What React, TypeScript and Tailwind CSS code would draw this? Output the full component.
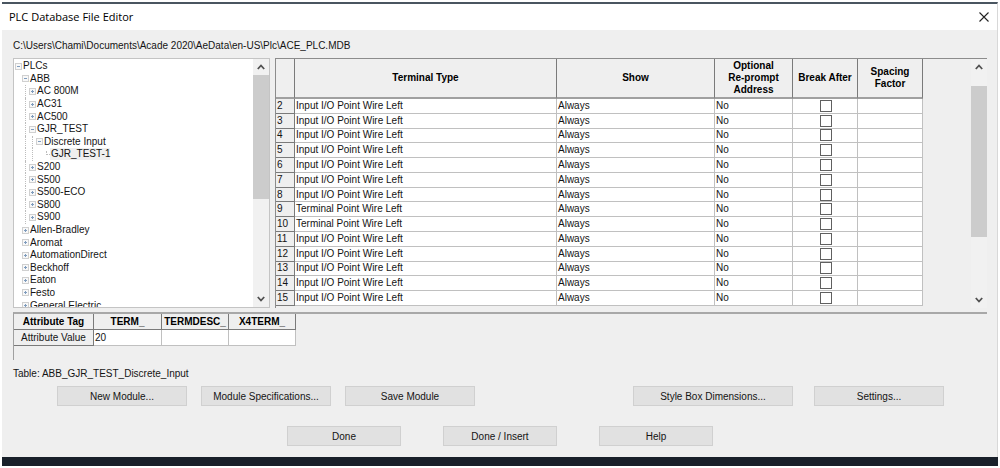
import React, { useState } from 'react';
import clsx from 'clsx';

interface TreeNode {
    label: string;
    level: number;
    state: 'open' | 'closed' | 'leaf';
}

interface TerminalRow {
    id: number;
    type: string;
    show: string;
    reprompt: string;
    spacing: string;
}

const treeNodes: TreeNode[] = [
    { label: 'PLCs', level: 0, state: 'open' },
    { label: 'ABB', level: 1, state: 'open' },
    { label: 'AC 800M', level: 2, state: 'closed' },
    { label: 'AC31', level: 2, state: 'closed' },
    { label: 'AC500', level: 2, state: 'closed' },
    { label: 'GJR_TEST', level: 2, state: 'open' },
    { label: 'Discrete Input', level: 3, state: 'open' },
    { label: 'GJR_TEST-1', level: 4, state: 'leaf' },
    { label: 'S200', level: 2, state: 'closed' },
    { label: 'S500', level: 2, state: 'closed' },
    { label: 'S500-ECO', level: 2, state: 'closed' },
    { label: 'S800', level: 2, state: 'closed' },
    { label: 'S900', level: 2, state: 'closed' },
    { label: 'Allen-Bradley', level: 1, state: 'closed' },
    { label: 'Aromat', level: 1, state: 'closed' },
    { label: 'AutomationDirect', level: 1, state: 'closed' },
    { label: 'Beckhoff', level: 1, state: 'closed' },
    { label: 'Eaton', level: 1, state: 'closed' },
    { label: 'Festo', level: 1, state: 'closed' },
    { label: 'General Electric', level: 1, state: 'closed' }
];

const terminalRows: TerminalRow[] = Array.from({ length: 14 }, (_, i) => {
    const id = i + 2;
    return {
        id,
        type: id === 9 || id === 10 ? 'Terminal Point Wire Left' : 'Input I/O Point Wire Left',
        show: 'Always',
        reprompt: 'No',
        spacing: ''
    };
});

const attributes = [
    { tag: 'TERM_', value: '20' },
    { tag: 'TERMDESC_', value: '' },
    { tag: 'X4TERM_', value: '' }
];

const Arrow: React.FC<{ up?: boolean }> = ({ up }) => (
    <svg viewBox="0 0 8 6" className="w-2 h-1.5" fill="none" stroke="#505050" strokeWidth="1.8">
        <path d={up ? 'M0.8 5 L4 1.5 L7.2 5' : 'M0.8 1 L4 4.5 L7.2 1'} />
    </svg>
);

const Expander: React.FC<{ open: boolean }> = ({ open }) => (
    <svg viewBox="0 0 7 7" className="w-[7px] h-[7px]" shapeRendering="crispEdges">
        <rect x="0.5" y="0.5" width="6" height="6" fill="#f8f8f8" stroke="#d0d0d0" />
        <path d="M2 3.5 H5" stroke="#7f9cbd" />
        {!open && <path d="M3.5 2 V5" stroke="#7f9cbd" />}
    </svg>
);

// Dotted connector that fills one indent step of the tree
const Guide: React.FC<{ visible: boolean }> = ({ visible }) => (
    <span className="w-[7px] shrink-0 self-stretch flex justify-center">
        {visible && <span className="border-l border-dotted border-[#bdbdbd]" />}
    </span>
);

const ScrollBar: React.FC<{ label: string; thumb: string }> = ({ label, thumb }) => (
    <div className="w-4 shrink-0 flex flex-col bg-[#f1f1f1]">
        <button aria-label={`Scroll ${label} up`} className="h-4 shrink-0 flex items-center justify-center">
            <Arrow up />
        </button>
        <div className="flex-1">
            <div className={clsx('bg-[#cccccc]', thumb)} />
        </div>
        <button aria-label={`Scroll ${label} down`} className="h-4 shrink-0 flex items-center justify-center">
            <Arrow />
        </button>
    </div>
);

const PushButton: React.FC<{ width: string; children: React.ReactNode }> = ({ width, children }) => (
    <button className={clsx('h-5 bg-[#e1e1e1] border border-[#d0d0d0] text-center hover:bg-[#e5f1fb]', width)}>
        {children}
    </button>
);

const ModuleTree = () => {
    const [selected, setSelected] = useState('GJR_TEST-1');

    return (
        <div className="w-[257px] h-[250px] shrink-0 flex bg-white border border-[#c4c4c4] overflow-hidden">
            <ul className="flex-1 h-[253px] shrink-0 flex flex-col pt-px pl-px">
                {treeNodes.map((node, i) => (
                    <li key={node.label} className="flex-1 min-h-0 flex items-center">
                        {Array.from({ length: node.level }, (_, step) => (
                            <Guide key={step} visible={step === 1 || (step === 2 && i < 13)} />
                        ))}
                        {node.state === 'leaf' ? (
                            <span className="w-[7px] h-[7px] flex justify-end">
                                <span className="w-1 h-1 border-l border-b border-dotted border-[#bdbdbd]" />
                            </span>
                        ) : (
                            <Expander open={node.state === 'open'} />
                        )}
                        <button
                            onClick={() => setSelected(node.label)}
                            className={clsx('leading-3 whitespace-nowrap pl-px', selected === node.label && 'bg-[#efefef]')}
                        >
                            {node.label}
                        </button>
                    </li>
                ))}
            </ul>
            <ScrollBar label="tree" thumb="h-[124px]" />
        </div>
    );
};

const headCell = 'p-0 border-r border-b-2 border-r-[#7a7a7a] border-b-[#a0a0a0] leading-3 font-bold text-black';
const bodyCell = 'p-0 pl-px border-r border-b border-[#c0c0c0] bg-white';

const TerminalGrid = () => {
    const [breaks, setBreaks] = useState<Record<number, boolean>>({});

    return (
        <div className="flex-1 flex border-t border-l border-[#8c8c8c]">
            <div className="flex-1 pr-12">
                <table className="w-full h-[247px] table-fixed border-separate border-spacing-0 leading-3">
                    <colgroup>
                        <col className="w-[19px]" />
                        <col />
                        <col className="w-[158px]" />
                        <col className="w-[78px]" />
                        <col className="w-[65px]" />
                        <col className="w-[65px]" />
                    </colgroup>
                    <thead>
                        <tr className="h-10">
                            <th className={headCell} aria-label="Terminal number" />
                            <th className={headCell}>Terminal Type</th>
                            <th className={headCell}>Show</th>
                            <th className={headCell}>Optional<br />Re-prompt<br />Address</th>
                            <th className={headCell}>Break After</th>
                            <th className={headCell}>Spacing<br />Factor</th>
                        </tr>
                    </thead>
                    <tbody>
                        {terminalRows.map((row) => (
                            <tr key={row.id}>
                                <th className="p-0 pl-px border-r border-b border-[#7a7a7a] text-left font-normal" scope="row">
                                    {row.id}
                                </th>
                                <td className={bodyCell}>{row.type}</td>
                                <td className={bodyCell}>{row.show}</td>
                                <td className={bodyCell}>{row.reprompt}</td>
                                <td className={bodyCell}>
                                    <input
                                        type="checkbox"
                                        aria-label={`Break after terminal ${row.id}`}
                                        checked={!!breaks[row.id]}
                                        onChange={(e) => setBreaks({ ...breaks, [row.id]: e.target.checked })}
                                        className="block mx-auto w-3 h-3 appearance-none border border-[#606060] bg-white checked:bg-[#606060]"
                                    />
                                </td>
                                <td className={bodyCell}>{row.spacing}</td>
                            </tr>
                        ))}
                    </tbody>
                </table>
            </div>
            <ScrollBar label="terminals" thumb="mt-[11px] h-[151px]" />
        </div>
    );
};

const AttributePanel = () => (
    <div className="h-12 border-t-2 border-l border-t-[#a8a8a8] border-l-[#a0a0a0]">
        <table className="table-fixed w-[282px] border-separate border-spacing-0 leading-3">
            <colgroup>
                <col className="w-20" />
                <col className="w-[68px]" />
                <col className="w-[67px]" />
                <col className="w-[67px]" />
            </colgroup>
            <tbody>
                <tr className="h-4">
                    <th className="p-0 border-r border-b border-[#7a7a7a] font-bold text-black" scope="row">Attribute Tag</th>
                    {attributes.map((attr) => (
                        <th key={attr.tag} className="p-0 border-r border-b border-[#7a7a7a] font-bold text-black" scope="col">
                            {attr.tag}
                        </th>
                    ))}
                </tr>
                <tr className="h-4">
                    <th className="p-0 border-r border-b border-[#7a7a7a] font-normal" scope="row">Attribute Value</th>
                    {attributes.map((attr) => (
                        <td key={attr.tag} className={bodyCell}>{attr.value}</td>
                    ))}
                </tr>
            </tbody>
        </table>
    </div>
);

export default function App() {
    return (
        <div className="p-0.5 bg-white font-['Liberation_Sans',Arial,sans-serif] text-[10px] text-[#141414]">
            <div className="bg-[#efefef] border-t-2 border-t-[#4a5560] border-r border-r-[#d8d8d8]">
                {/* Title bar */}
                <header className="h-[26px] bg-white flex items-center justify-between pl-[7px] pr-2">
                    <h1 className="font-['Open_Sans','Noto_Sans',sans-serif] text-[11px] text-black">
                        PLC Database File Editor
                    </h1>
                    <button aria-label="Close">
                        <svg viewBox="0 0 10 10" className="w-2.5 h-2.5" stroke="#222" strokeWidth="1.1">
                            <path d="M0.5 0.5 L9.5 9.5 M9.5 0.5 L0.5 9.5" />
                        </svg>
                    </button>
                </header>

                <main className="pl-[11px] pr-2.5 pb-[11px]">
                    <p className="pt-2.5 pb-1.5 leading-3">
                        C:\Users\Chami\Documents\Acade 2020\AeData\en-US\Plc\ACE_PLC.MDB
                    </p>

                    <div className="flex gap-[5px] mb-1">
                        <ModuleTree />
                        <TerminalGrid />
                    </div>

                    <AttributePanel />
                    <p className="pt-2 pb-1.5 leading-3">Table: ABB_GJR_TEST_Discrete_Input</p>

                    {/* Module actions */}
                    <div className="flex justify-between pl-11 pr-[43px] mb-5">
                        <div className="flex gap-3.5">
                            <PushButton width="w-[130px]">New Module...</PushButton>
                            <PushButton width="w-[130px]">Module Specifications...</PushButton>
                            <PushButton width="w-[130px]">Save Module</PushButton>
                        </div>
                        <div className="flex gap-[21px]">
                            <PushButton width="w-40">Style Box Dimensions...</PushButton>
                            <PushButton width="w-[130px]">Settings...</PushButton>
                        </div>
                    </div>

                    {/* Dialog actions */}
                    <div className="flex justify-center gap-[42px]">
                        <PushButton width="w-[114px]">Done</PushButton>
                        <PushButton width="w-[114px]">Done / Insert</PushButton>
                        <PushButton width="w-[114px]">Help</PushButton>
                    </div>
                </main>
            </div>
            <div className="h-[9px] bg-[#19202a]" />
        </div>
    );
}
